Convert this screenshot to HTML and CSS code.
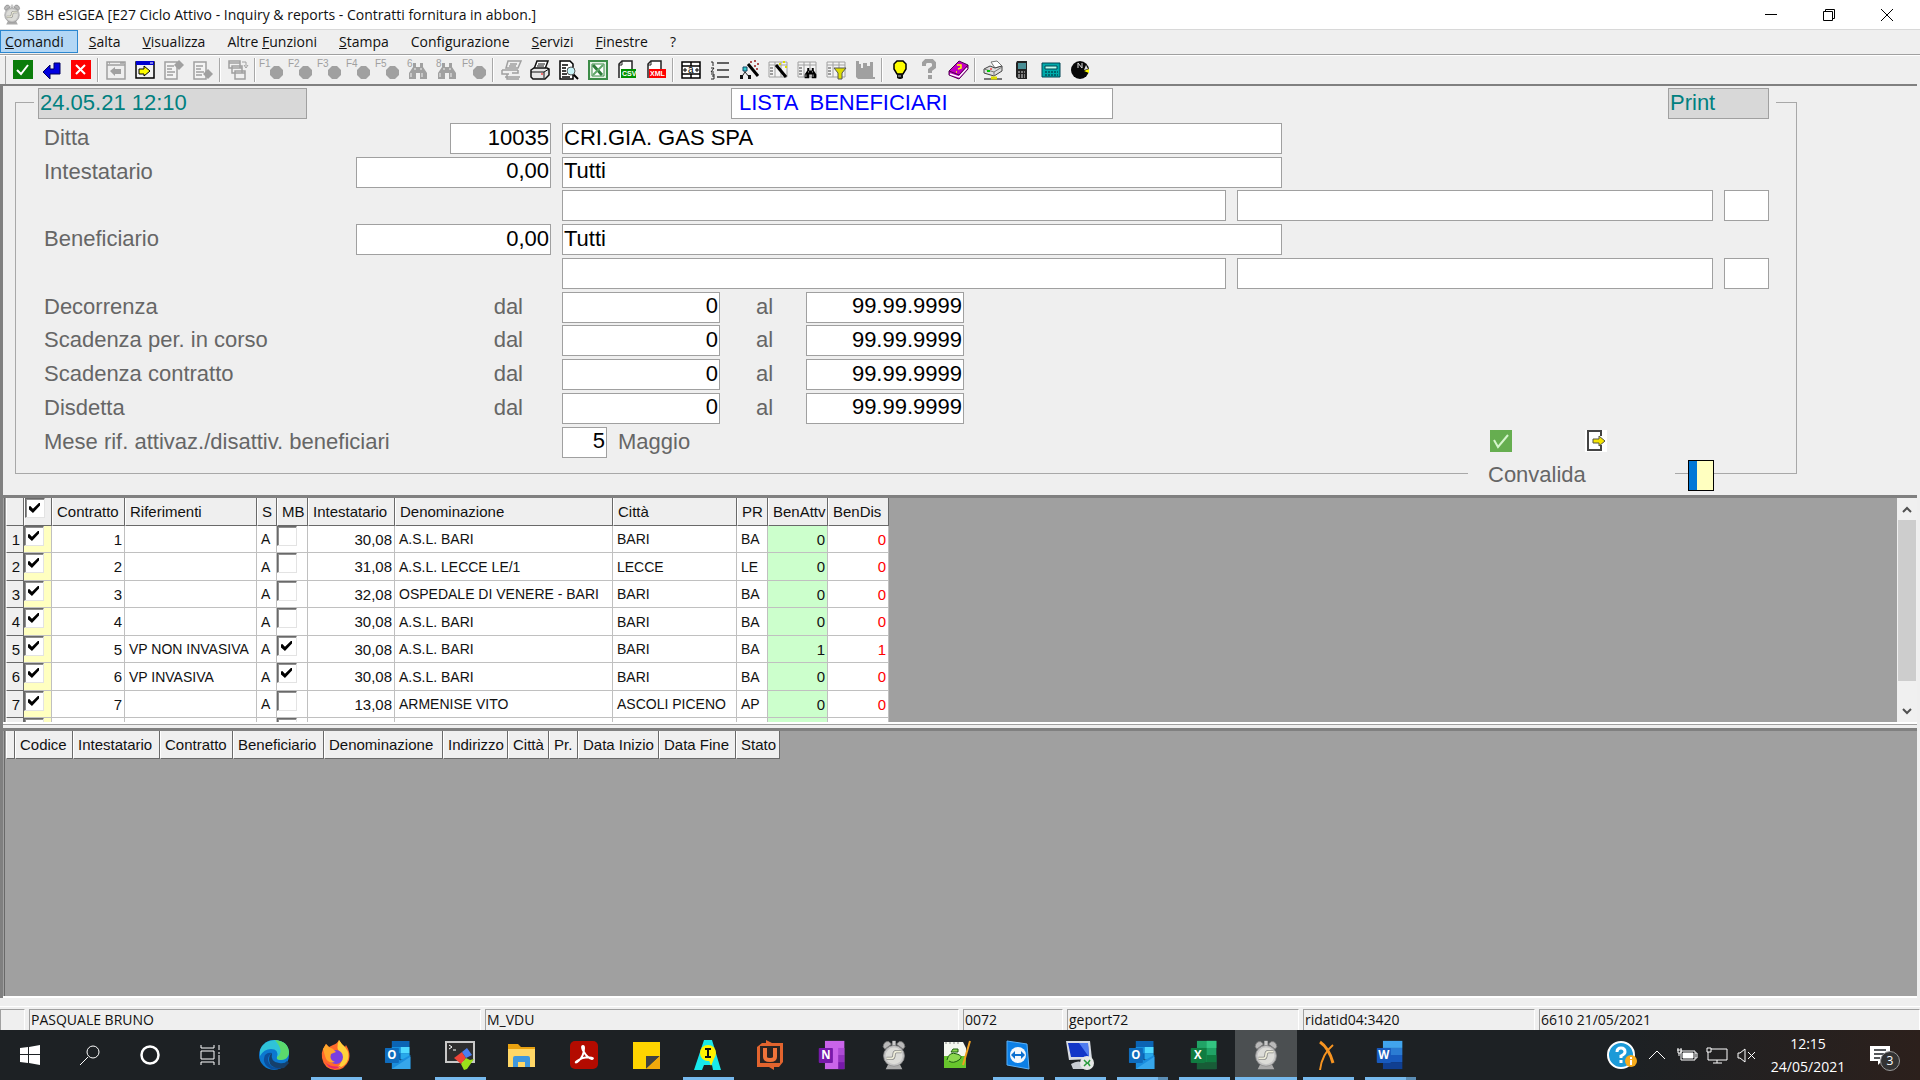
FILE: index.html
```html
<!DOCTYPE html>
<html lang="it">
<head>
    <meta charset="UTF-8">
    <meta name="viewport" content="width=device-width, initial-scale=1.0">
    <title>SBH eSIGEA</title>
    <link rel="stylesheet" href="styles.css">
</head>
<body>

<!-- Shared icon shapes -->
<svg class="defs" aria-hidden="true">
    <symbol id="clock" viewBox="0 0 30 36">
        <path d="M2 8 Q3 1 9 2 L12 5 L4 11Z M28 8 Q27 1 21 2 L18 5 L26 11Z" fill="#b9b9b9" stroke="#777"/>
        <rect x="13" y="1" width="4" height="6" fill="#c9c9c9"/>
        <path d="M5 35 L8 29 H22 L25 35Z" fill="#aaa"/>
        <circle cx="15" cy="19" r="12.500" fill="#c4c4c4" stroke="#8d8d8d"/>
        <circle cx="15" cy="19" r="10" fill="#dcdcd8"/>
        <path d="M6 22 H12 Q15 22 15 18 Q15 14 18 14 H24" fill="none" stroke="#888" stroke-width="4"/>
        <path d="M6 22 H12 Q15 22 15 18 Q15 14 18 14 H24" fill="none" stroke="#ecebd8" stroke-width="2"/>
    </symbol>
    <symbol id="window" viewBox="0 0 20 20">
        <path d="M1 2 H19 V19 H1Z M1 5 H19 M3 3 H4 M14 3 H18" fill="none" stroke="#a0a0a0" stroke-width="1.500"/>
        <path d="M4 11 L9 7 V9 H15 V14 H9 V16Z" fill="#a0a0a0"/>
    </symbol>
    <symbol id="page" viewBox="0 0 20 20">
        <path d="M1 2 H13 V19 H1Z M3 6 H10 M3 9 H8 M3 12 H11 M3 15 H9" fill="#f4f4f4" stroke="#a0a0a0" stroke-width="1.500"/>
    </symbol>
    <symbol id="dot" viewBox="0 0 20 20">
        <path d="M11 6 H16 L20 10 V15 L16 19 H11 L7 15 V10Z" fill="#a0a0a0"/>
    </symbol>
    <symbol id="binoculars" viewBox="0 0 20 20">
        <path d="M5 3 H8 V7 H12 V3 H15 V7 L19 13 V19 H12 V13 H8 V19 H1 V13 L5 7Z"/>
        <path d="M3 13 V17 M14 13 V17 M7 8 V10 M13 8 V10" stroke="#eee" stroke-width="1"/>
    </symbol>
    <symbol id="table" viewBox="0 0 20 20">
        <path d="M1 2 H19 V17 H1Z" fill="#f4f4f4" stroke="#a0a0a0"/>
        <path d="M1 5 H19 M7 2 V17 M13 2 V17" stroke="#a0a0a0" fill="none"/>
        <path d="M2 8 H6 M2 11 H6 M2 14 H6" stroke="#444" stroke-dasharray="3 1"/>
    </symbol>
    <symbol id="printer" viewBox="0 0 20 20">
        <path d="M7 1 H18 L15 9 H4Z" fill="#fff" stroke="currentColor" stroke-width="1.500"/>
        <path d="M8 4 H15 M7 6 H14" stroke="currentColor"/>
        <path d="M1 10 L4 8 H17 L19 9 V15 L15 19 H3 L1 17Z" fill="#e6e6e6" stroke="currentColor" stroke-width="1.500"/>
        <path d="M1 12 H14 V18 M14 12 L19 9" fill="none" stroke="currentColor"/>
    </symbol>
    <symbol id="outlook" viewBox="0 0 30 34">
        <path d="M8 1 H28 V22 H8Z" fill="#0b64b4"/>
        <path d="M8 8 H18 V15 H8Z" fill="#1490df"/>
        <path d="M18 8 H28 V15 H18Z" fill="#50d9ff"/>
        <path d="M18 15 H28 V22 H18Z" fill="#28a8ea"/>
        <path d="M8 17 L18 23 L29 17 V33 H8Z" fill="#1a8ddd"/>
        <path d="M8 33 L29 19 V33Z" fill="#36a6ea"/>
        <rect x="0" y="9" width="16" height="17" rx="1" fill="#0f6cbd"/>
    </symbol>
</svg>

<header class="titlebar">
    <svg class="app-icon"><use href="#clock"/></svg>
    <h1>SBH eSIGEA [E27 Ciclo Attivo - Inquiry &amp; reports - Contratti fornitura in abbon.]</h1>
    <div class="window-buttons">
        <button aria-label="Riduci"><svg viewBox="0 0 12 12"><path d="M0 5.500 H12"/></svg></button>
        <button aria-label="Ripristina"><svg viewBox="0 0 12 12"><path d="M.5 2.500 H9.500 V11.500 H.5Z M2.500 2.500 V.5 H11.500 V9.500 H9.500"/></svg></button>
        <button aria-label="Chiudi"><svg viewBox="0 0 12 12"><path d="M0 0 L12 12 M12 0 L0 12"/></svg></button>
    </div>
</header>

<nav class="menu">
    <button class="open"><u>C</u>omandi</button>
    <button><u>S</u>alta</button>
    <button><u>V</u>isualizza</button>
    <button>Altre <u>F</u>unzioni</button>
    <button><u>S</u>tampa</button>
    <button>Confi<u>g</u>urazione</button>
    <button><u>S</u>ervizi</button>
    <button><u>F</u>inestre</button>
    <button>?</button>
</nav>

<div class="toolbar">
    <button aria-label="Conferma"><svg viewBox="0 0 20 20"><path d="M0 0 H20 V19 H0Z" fill="#0b7d0b"/><path d="M4 10 L8 14 L15 5" fill="none" stroke="#fff" stroke-width="2"/></svg></button>
    <button aria-label="Invio"><svg viewBox="0 0 20 20"><path d="M1 12 L8 5 V9 H12 V3 H18 V14 H8 V19Z" fill="#0000e0" stroke="#000060"/></svg></button>
    <button aria-label="Annulla"><svg viewBox="0 0 20 20"><path d="M0 0 H20 V19 H0Z" fill="#f00"/><path d="M5 5 L14 14 M14 5 L5 14" stroke="#fff" stroke-width="2"/></svg></button>
    <i></i>
    <button aria-label="Indietro"><svg><use href="#window"/></svg></button>
    <button aria-label="Avanti"><svg viewBox="0 0 20 20"><path d="M1 2 H19 V18 H1Z" fill="#f4f4f4" stroke="#000" stroke-width="1.500"/><path d="M1 1 H19 V5 H1Z" fill="#0000d0"/><path d="M15 3 H18" stroke="#fff"/><path d="M4 9 H9 V6 L15 11 L9 16 V14 H4Z" fill="#ff0" stroke="#000"/></svg></button>
    <button aria-label="Pagina su"><svg viewBox="0 0 20 20"><use href="#page"/><path d="M15 0 L20 5 L15 10 L10 5Z" fill="#a0a0a0"/></svg></button>
    <button aria-label="Pagina giu"><svg viewBox="0 0 20 20"><use href="#page"/><path d="M15 9 L20 14 L15 19 L10 14Z" fill="#a0a0a0"/></svg></button>
    <i></i>
    <button aria-label="Finestre"><svg viewBox="0 0 20 20"><path d="M1 1 H12 V8 H1Z M4 6 H14 V13 H4Z M7 11 H17 V19 H7Z M1 3 H12 M4 8 H14 M7 13 H17" fill="#f0f0f0" stroke="#a0a0a0" stroke-width="1.500"/><path d="M14 2 H18 V6 M16 5 L18 8 L20 5" fill="none" stroke="#a0a0a0"/></svg></button>
    <i></i>
    <button aria-label="F1"><svg viewBox="0 0 20 20"><text x="-4" y="7">F1</text><use href="#dot"/></svg></button>
    <button aria-label="F2"><svg viewBox="0 0 20 20"><text x="-4" y="7">F2</text><use href="#dot"/></svg></button>
    <button aria-label="F3"><svg viewBox="0 0 20 20"><text x="-4" y="7">F3</text><use href="#dot"/></svg></button>
    <button aria-label="F4"><svg viewBox="0 0 20 20"><text x="-4" y="7">F4</text><use href="#dot"/></svg></button>
    <button aria-label="F5"><svg viewBox="0 0 20 20"><text x="-4" y="7">F5</text><use href="#dot"/></svg></button>
    <button aria-label="Cerca 6"><svg viewBox="0 0 20 20"><text x="-1" y="7">6</text><use href="#binoculars" fill="#a0a0a0"/></svg></button>
    <button aria-label="Cerca 8"><svg viewBox="0 0 20 20"><text x="-1" y="7">8</text><use href="#binoculars" fill="#a0a0a0"/></svg></button>
    <button aria-label="F9"><svg viewBox="0 0 20 20"><text x="-4" y="7">F9</text><use href="#dot"/></svg></button>
    <i></i>
    <button aria-label="Stampa video"><svg viewBox="0 0 20 20"><path d="M7 1 H20 L17 8 H5Z M9 4 H16 M8 6 H15 M1 10 H17 M1 10 V14 H8 M4 17 H19 M17 10 V13 H11 M6 14 V19 H18" fill="none" stroke="#a0a0a0" stroke-width="1.500"/></svg></button>
    <button aria-label="Stampa"><svg viewBox="0 0 20 20"><use href="#printer"/><path d="M11 14 H13" stroke="#f00"/></svg></button>
    <button aria-label="Anteprima"><svg viewBox="0 0 20 20"><path d="M1 1 H11 L14 4 V19 H1Z M3 5 H9 M3 8 H7 M3 11 H7 M3 14 H8 M3 17 H11" fill="#fff" stroke="#000" stroke-width="1.500"/><path d="M14 14 L19 19" stroke="#000" stroke-width="2"/><circle cx="12" cy="11" r="4" fill="#c8f4f8" stroke="#555"/></svg></button>
    <button aria-label="Excel"><svg viewBox="0 0 20 20"><path d="M1 1 H19 V19 H1Z" fill="#e4f2e4" stroke="#3c8c48" stroke-width="2"/><path d="M4 4 H16 V16 H4Z" fill="#fff" stroke="#3c8c48"/><path d="M5 5 L14 15" stroke="#2f7d3b" stroke-width="3"/><path d="M15 5 L5 15" stroke="#5fa868" stroke-width="2"/></svg></button>
    <button aria-label="CSV"><svg viewBox="0 0 20 20"><path d="M2 18 V4 L5 1 H15 V9" fill="#fff" stroke="#222" stroke-width="1.500"/><path d="M5 1 V5 H2" fill="none" stroke="#222"/><path d="M4 9 H19 V18 H4Z" fill="#009000"/><text x="5" y="16" class="file-type">CSV</text></svg></button>
    <button aria-label="XML"><svg viewBox="0 0 20 20"><path d="M2 18 V4 L5 1 H15 V9" fill="#fff" stroke="#222" stroke-width="1.500"/><path d="M5 1 V5 H2" fill="none" stroke="#222"/><path d="M3 9 H20 V18 H3Z" fill="#f00"/><text x="4" y="16" class="file-type">XML</text></svg></button>
    <i></i>
    <button aria-label="Larghezza colonne"><svg viewBox="0 0 20 20"><path d="M1 2 H19 V18 H1Z M1 6 H19 M1 14 H19 M10 2 V6 M10 14 V18" fill="#fff" stroke="#000" stroke-width="1.500"/><path d="M2 10 H6 M4 8 V12 M14 10 H18 M16 8 V12" stroke="#000"/><text x="7" y="13" class="glyph">a</text></svg></button>
    <button aria-label="Numerazione"><svg viewBox="0 0 20 20"><path d="M7 3 H19 M7 10 H19 M7 17 H19" stroke="#333" stroke-width="1.500"/><path d="M1 2 H3 V6 M1 8 H4 L1 12 H4 M1 14 H4 V19 H1 M2 16 H4" fill="none" stroke="#222"/></svg></button>
    <button aria-label="Bacchetta"><svg viewBox="0 0 20 20"><path d="M9 4 L19 16" stroke="#000" stroke-width="3"/><path d="M6 9 V12 L2 18 M6 12 L11 18" fill="none" stroke="#222"/><path d="M4 7 H8 V11 H4Z" fill="#3cc" stroke="#146"/><path d="M1 15 H4 V19 H1Z M9 15 H12 V19 H9Z" fill="#111"/><path d="M11 2 H13 M15 1 H17 M18 4 H20 M15 6 H17 M17 9 H19" stroke="#b05050" stroke-width="2"/></svg></button>
    <button aria-label="Modifica tabella"><svg viewBox="0 0 20 20"><use href="#table"/><path d="M8 5 L18 17" stroke="#000" stroke-width="3"/><path d="M11 4 H13 M15 2 H17 M17 7 H19" stroke="#dd0" stroke-width="2"/></svg></button>
    <button aria-label="Cerca in tabella"><svg viewBox="0 0 20 20"><use href="#table"/><use href="#binoculars" x="7" y="6" width="13" height="13" fill="#000"/></svg></button>
    <button aria-label="Filtro"><svg viewBox="0 0 20 20"><use href="#table"/><path d="M8 8 H20 L16 13 V19 H12 V13Z" fill="#dd0" stroke="#555"/></svg></button>
    <button aria-label="Grafico"><svg viewBox="0 0 20 20"><path d="M1 1 H4 V4 H6 V8 H8 V3 H12 V6 H15 V2 H18 V17 H20 V19 H3 L1 17Z" fill="#a0a0a0"/></svg></button>
    <i></i>
    <button aria-label="Suggerimenti"><svg viewBox="0 0 20 20"><path d="M7 1 H13 L16 4 V9 L13 14 H7 L4 9 V4Z" fill="#ff0" stroke="#000" stroke-width="1.500"/><path d="M7 14 H13 V18 L11 19 H9 L7 18Z" fill="#111"/><path d="M8 16 H11" stroke="#ccc"/></svg></button>
    <button aria-label="Aiuto"><svg viewBox="0 0 20 20"><path d="M5 6 V3 L7 1 H13 L15 3 V7 L11 10 V13 M11 15 V19" fill="none" stroke="#a0a0a0" stroke-width="4"/></svg></button>
    <button aria-label="Manuale"><svg viewBox="0 0 20 20"><path d="M1 11 L11 1 L20 5 V9 L11 19 L1 15Z" fill="#c000c0" stroke="#500050"/><path d="M2 14 L11 17 L19 8" stroke="#fff" stroke-width="1.500" fill="none"/><path d="M1 11 L11 15 L20 5" stroke="#500050" fill="none"/><path d="M9 5 L13 5 L13 8 L10 9 M8 12 H9" stroke="#ff0" fill="none" stroke-width="1.500"/></svg></button>
    <i></i>
    <button aria-label="Stampante di rete"><svg viewBox="0 0 20 20"><path d="M8 2 L14 1 L19 6 L12 8Z" fill="#fff" stroke="#777"/><path d="M1 9 L7 6 L12 8 L19 6 V11 L11 16 L1 13Z" fill="#ddd" stroke="#444"/><path d="M1 9 L11 12 L19 7 M11 12 V16" stroke="#777"/><path d="M4 11 H7" stroke="#0c0" stroke-width="2"/><path d="M7 9 H9" stroke="#f00"/><path d="M1 19 H19" stroke="#000"/><path d="M8 18 H14" stroke="#dd0" stroke-width="3"/></svg></button>
    <button aria-label="Palmare"><svg viewBox="0 0 20 20"><path d="M5 1 H15 V19 H6 L4 17 V3Z" fill="#222"/><path d="M6 3 H14 V9 H6Z" fill="#4a8f96"/><path d="M6 12 H13 M6 15 H13 M6 17 H13" stroke="#ddd" stroke-dasharray="2 1"/></svg></button>
    <button aria-label="Terminale"><svg viewBox="0 0 20 20"><path d="M1 3 H19 V17 H1Z" fill="#0aa" stroke="#045"/><path d="M4 6 H16 V9 H4Z" fill="#bfe" stroke="#045"/><path d="M4 12 H17 M4 15 H17" stroke="#023" stroke-dasharray="2 1"/></svg></button>
    <button aria-label="Bussola"><svg viewBox="0 0 20 20"><circle cx="10" cy="10" r="9" fill="#080808"/><path d="M8 3 V8 M8 3 L12 8 V3" fill="none" stroke="#ddd"/><path d="M14 10 L16 5 L18 9Z" fill="#ddd"/><path d="M14 11 L19 9 V13Z" fill="#ff0"/></svg></button>
</div>

<main>
    <form>
        <fieldset>
            <legend>
                <input class="info date-box" value="24.05.21 12:10" aria-label="Data" readonly>
                <input class="title-box" value="LISTA  BENEFICIARI" aria-label="Titolo" readonly>
                <input class="info print-box" value="Print" aria-label="Print" readonly>
            </legend>
            <div class="rows">
                <div class="row">
                    <div class="lead"><label for="ditta">Ditta</label><input id="ditta" class="num w-code" value="10035"></div>
                    <input class="w-name" value="CRI.GIA. GAS SPA" aria-label="Ragione sociale">
                </div>
                <div class="row">
                    <div class="lead"><label for="intestatario">Intestatario</label><input id="intestatario" class="num w-amount" value="0,00"></div>
                    <input class="w-name" value="Tutti" aria-label="Nome intestatario">
                </div>
                <div class="row">
                    <div class="lead"></div>
                    <input class="w-street" aria-label="Indirizzo intestatario">
                    <input class="w-city" aria-label="Comune intestatario">
                    <input class="w-short" aria-label="Provincia intestatario">
                </div>
                <div class="row">
                    <div class="lead"><label for="beneficiario">Beneficiario</label><input id="beneficiario" class="num w-amount" value="0,00"></div>
                    <input class="w-name" value="Tutti" aria-label="Nome beneficiario">
                </div>
                <div class="row">
                    <div class="lead"></div>
                    <input class="w-street" aria-label="Indirizzo beneficiario">
                    <input class="w-city" aria-label="Comune beneficiario">
                    <input class="w-short" aria-label="Provincia beneficiario">
                </div>
                <div class="row">
                    <div class="lead"><span>Decorrenza</span><label class="from" for="dec1">dal</label></div>
                    <input id="dec1" class="num w-date" value="0">
                    <label class="to" for="dec2">al</label>
                    <input id="dec2" class="num w-date" value="99.99.9999">
                </div>
                <div class="row">
                    <div class="lead"><span>Scadenza per. in corso</span><label class="from" for="per1">dal</label></div>
                    <input id="per1" class="num w-date" value="0">
                    <label class="to" for="per2">al</label>
                    <input id="per2" class="num w-date" value="99.99.9999">
                </div>
                <div class="row">
                    <div class="lead"><span>Scadenza contratto</span><label class="from" for="con1">dal</label></div>
                    <input id="con1" class="num w-date" value="0">
                    <label class="to" for="con2">al</label>
                    <input id="con2" class="num w-date" value="99.99.9999">
                </div>
                <div class="row">
                    <div class="lead"><span>Disdetta</span><label class="from" for="dis1">dal</label></div>
                    <input id="dis1" class="num w-date" value="0">
                    <label class="to" for="dis2">al</label>
                    <input id="dis2" class="num w-date" value="99.99.9999">
                </div>
                <div class="row">
                    <div class="lead"><label for="mese">Mese rif. attivaz./disattiv. beneficiari</label></div>
                    <input id="mese" class="num w-short" value="5">
                    <span>Maggio</span>
                    <div class="actions">
                        <button type="button" aria-label="Convalida"><svg viewBox="0 0 22 22"><path d="M0 0 H22 V22 H0Z" fill="#66ae50"/><path d="M4 10 L8 17 L18 5" fill="none" stroke="#d6f5cc" stroke-width="2"/></svg></button>
                        <button type="button" aria-label="Esci"><svg viewBox="0 0 22 22"><path d="M0 0 H22 V22 H0Z" fill="#fff"/><path d="M16 6 V1 H3 V20 H16 V15" fill="none" stroke="#444" stroke-width="2"/><path d="M8 9 H14 V6 L20 11 L14 16 V13 H8Z" fill="#f4e400" stroke="#554"/></svg></button>
                    </div>
                </div>
                <div class="row confirm-row">
                    <span class="confirm">Convalida</span>
                    <input class="cursor" aria-label="Conferma">
                </div>
            </div>
        </fieldset>
    </form>

    <section class="panel contracts">
        <div class="viewport">
            <table>
                <colgroup>
                    <col class="c18"><col class="c28"><col class="c73"><col class="c132"><col class="c20"><col class="c31">
                    <col class="c87"><col class="c218"><col class="c124"><col class="c31"><col class="c60"><col class="c61">
                </colgroup>
                <thead>
                    <tr><th></th><th class="tick"><input type="checkbox" aria-label="Seleziona tutti" checked></th><th>Contratto</th><th>Riferimenti</th><th>S</th><th>MB</th><th>Intestatario</th><th>Denominazione</th><th>Città</th><th>PR</th><th>BenAttv</th><th>BenDis</th></tr>
                </thead>
                <tbody>
                    <tr><th>1</th><td class="tick sel"><input type="checkbox" aria-label="Seleziona 1" checked></td><td class="r">1</td><td></td><td>A</td><td class="tick"><input type="checkbox" aria-label="MB 1"></td><td class="r">30,08</td><td>A.S.L. BARI</td><td>BARI</td><td>BA</td><td class="r on">0</td><td class="r off">0</td></tr>
                    <tr><th>2</th><td class="tick sel"><input type="checkbox" aria-label="Seleziona 2" checked></td><td class="r">2</td><td></td><td>A</td><td class="tick"><input type="checkbox" aria-label="MB 2"></td><td class="r">31,08</td><td>A.S.L. LECCE LE/1</td><td>LECCE</td><td>LE</td><td class="r on">0</td><td class="r off">0</td></tr>
                    <tr><th>3</th><td class="tick sel"><input type="checkbox" aria-label="Seleziona 3" checked></td><td class="r">3</td><td></td><td>A</td><td class="tick"><input type="checkbox" aria-label="MB 3"></td><td class="r">32,08</td><td>OSPEDALE DI VENERE - BARI</td><td>BARI</td><td>BA</td><td class="r on">0</td><td class="r off">0</td></tr>
                    <tr><th>4</th><td class="tick sel"><input type="checkbox" aria-label="Seleziona 4" checked></td><td class="r">4</td><td></td><td>A</td><td class="tick"><input type="checkbox" aria-label="MB 4"></td><td class="r">30,08</td><td>A.S.L. BARI</td><td>BARI</td><td>BA</td><td class="r on">0</td><td class="r off">0</td></tr>
                    <tr><th>5</th><td class="tick sel"><input type="checkbox" aria-label="Seleziona 5" checked></td><td class="r">5</td><td>VP NON INVASIVA</td><td>A</td><td class="tick"><input type="checkbox" aria-label="MB 5" checked></td><td class="r">30,08</td><td>A.S.L. BARI</td><td>BARI</td><td>BA</td><td class="r on">1</td><td class="r off">1</td></tr>
                    <tr><th>6</th><td class="tick sel"><input type="checkbox" aria-label="Seleziona 6" checked></td><td class="r">6</td><td>VP INVASIVA</td><td>A</td><td class="tick"><input type="checkbox" aria-label="MB 6" checked></td><td class="r">30,08</td><td>A.S.L. BARI</td><td>BARI</td><td>BA</td><td class="r on">0</td><td class="r off">0</td></tr>
                    <tr><th>7</th><td class="tick sel"><input type="checkbox" aria-label="Seleziona 7" checked></td><td class="r">7</td><td></td><td>A</td><td class="tick"><input type="checkbox" aria-label="MB 7"></td><td class="r">13,08</td><td>ARMENISE VITO</td><td>ASCOLI PICENO</td><td>AP</td><td class="r on">0</td><td class="r off">0</td></tr>
                    <tr><th></th><td class="tick sel"><input type="checkbox" aria-label="Seleziona 8"></td><td></td><td></td><td></td><td class="tick"><input type="checkbox" aria-label="MB 8"></td><td></td><td></td><td></td><td></td><td class="on"></td><td></td></tr>
                </tbody>
            </table>
        </div>
        <div class="scrollbar">
            <svg viewBox="0 0 20 20"><path d="M6 13 L10 9 L14 13"/></svg>
            <div class="thumb"></div>
            <svg viewBox="0 0 20 20"><path d="M6 8 L10 12 L14 8"/></svg>
        </div>
    </section>

    <section class="panel details">
        <div class="viewport">
            <table>
                <colgroup>
                    <col class="c9"><col class="c58"><col class="c87"><col class="c73"><col class="c91"><col class="c119">
                    <col class="c65"><col class="c41"><col class="c29"><col class="c81"><col class="c77"><col class="c44">
                </colgroup>
                <thead>
                    <tr><th></th><th>Codice</th><th>Intestatario</th><th>Contratto</th><th>Beneficiario</th><th>Denominazione</th><th>Indirizzo</th><th>Città</th><th>Pr.</th><th>Data Inizio</th><th>Data Fine</th><th>Stato</th></tr>
                </thead>
            </table>
        </div>
    </section>
</main>

<footer class="statusbar">
    <span></span>
    <span>PASQUALE BRUNO</span>
    <span>M_VDU</span>
    <span>0072</span>
    <span>geport72</span>
    <span>ridatid04:3420</span>
    <span>6610 21/05/2021</span>
</footer>

<div class="taskbar">
    <div class="system">
        <button aria-label="Start"><svg viewBox="0 0 20 20"><path d="M0 3 L8 2 V9 H0Z M9 2 L20 0 V9 H9Z M0 10 H8 V18 L0 17Z M9 10 H20 V20 L9 18Z" fill="#fff"/></svg></button>
        <button aria-label="Cerca"><svg viewBox="0 0 20 20" class="line"><circle cx="13" cy="7" r="6"/><path d="M8 12 L0 20"/></svg></button>
        <button aria-label="Cortana"><svg viewBox="0 0 20 20"><circle cx="10" cy="10" r="8.500" fill="none" stroke="#fff" stroke-width="2.500"/></svg></button>
        <button aria-label="Visualizza attivita"><svg viewBox="0 0 20 20" class="line"><path d="M1 0 V3 H14 V0 M1 6 H14 V14 H1Z M1 20 V17 H14 V20 M19 0 V5 M19 10 V20 M18 8 H20"/></svg></button>
    </div>
    <div class="apps">
        <button aria-label="Edge"><svg viewBox="0 0 30 30"><circle cx="15" cy="15" r="15" fill="#0c78d0"/><path d="M1 10 Q5 0 16 0 Q29 1 30 12 Q30 19 22 20 Q17 20 18 17 Q20 9 12 9 Q5 9 1 16Z" fill="#2fc3d8"/><path d="M16 0 Q29 1 30 12 Q30 19 22 20 Q17 20 18 17 Q26 12 16 0Z" fill="#5bd96c"/><path d="M13 13 Q7 17 10 23 Q14 31 26 25 Q20 31 12 29 Q2 24 6 15 Q9 12 13 13Z" fill="#0b4f9c"/><path d="M13 13 Q11 22 20 23 Q26 24 28 21 L30 23 L25 28 Q11 30 10 20 Q10 15 13 13Z" fill="#15406c"/></svg></button>
        <button class="running" aria-label="Firefox"><svg viewBox="0 0 30 30"><path d="M2 9 L5 4 L8 7 L12 5 Q16 4 18 0 Q21 5 24 7 L25 5 Q30 13 28 20 Q24 30 14 30 Q3 29 1 18 Q0 13 2 9Z" fill="#ff6a2b"/><path d="M18 0 Q21 5 24 7 Q30 14 26 22 Q22 28 15 28 Q23 23 20 14 Q14 9 18 0Z" fill="#ffd13b"/><circle cx="15" cy="17" r="7" fill="#7a3fe0"/><path d="M2 9 L5 4 L8 7 L12 9 L15 12 L10 14 Q8 20 14 22 Q6 24 4 16Z" fill="#ffa62b"/><path d="M4 22 Q10 28 20 26 Q15 31 8 27Z" fill="#e8286c"/></svg></button>
        <button aria-label="Outlook"><svg viewBox="0 0 30 34"><use href="#outlook"/><text x="8" y="22" class="badge-letter">O</text></svg></button>
        <button class="running" aria-label="Terminale"><svg viewBox="0 0 30 30"><path d="M1 2 H29 V22 H1Z" fill="#2e2e2e" stroke="#c8c8c8" stroke-width="2"/><path d="M4 5 L7 7 L4 9 M8 10 H11" fill="none" stroke="#fff"/><path d="M9 18 L17 12 L21 18 L16 24Z" fill="#ef4438"/><path d="M17 12 L22 8 L27 15 L21 18Z" fill="#4b7ff0"/><path d="M16 24 L21 18 L25 20 L29 19 L22 29 L19 30Z" fill="#9be01a"/></svg></button>
        <button aria-label="Esplora file"><svg viewBox="0 0 30 30"><path d="M1 4 H11 L14 7 H28 V27 H1Z" fill="#e9a210"/><path d="M1 9 H28 V27 H1Z" fill="#ffd766"/><path d="M6 27 V18 Q6 16 8 16 H21 Q23 16 23 18 V27 H18 V22 H11 V27Z" fill="#3f97dd"/></svg></button>
        <button aria-label="Acrobat"><svg viewBox="0 0 30 30"><rect x="1" y="1" width="28" height="28" rx="5" fill="#b30b00"/><path d="M14 6 C11 6 16 17 23 19 C27 18 17 15 8 21 C3 25 15 21 15 8 Q15 6 14 6Z" fill="none" stroke="#fff" stroke-width="2"/></svg></button>
        <button aria-label="Note"><svg viewBox="0 0 30 30"><path d="M2 2 H29 V29 H2Z" fill="#ffd400"/><path d="M15 29 V16 H29Z" fill="#3f4142"/><path d="M15 29 L29 16 V29Z" fill="#f0a80c"/></svg></button>
        <button class="running" aria-label="Assistenza"><svg viewBox="0 0 30 30"><path d="M11 0 H19 L28 30 H20 L19 25 H11 L9 30 H1Z" fill="#18e8ec"/><circle cx="15" cy="13" r="8" fill="#fff200"/><path d="M16 20 L18 26 L22 16Z" fill="#fff200"/><path d="M12 9 H18 M15 9 V17 M12 17 H18" stroke="#111" stroke-width="2"/></svg></button>
        <button aria-label="UltraEdit"><svg viewBox="0 0 30 30"><path d="M2 7 L7 3 H11 V0 L17 3 H28 V22 L24 27 H19 V30 L14 27 H2Z" fill="#e2642e"/><path d="M5 6 H25 V23 H5Z" fill="#2a2422"/><path d="M10 8 V17 Q10 20 15 20 Q20 20 20 17 V8" fill="none" stroke="#f0743a" stroke-width="4"/></svg></button>
        <button aria-label="OneNote"><svg viewBox="0 0 30 34"><path d="M7 1 H29 V33 H7Z" fill="#ca64ea"/><path d="M22 9 H29 V17 H22Z" fill="#ae4bd5"/><path d="M22 17 H29 V25 H22Z" fill="#9332bf"/><path d="M22 25 H29 V33 H22Z" fill="#7719aa"/><rect x="0" y="9" width="16" height="17" rx="1" fill="#7719aa"/><text x="8" y="22" class="badge-letter">N</text></svg></button>
        <button aria-label="eSIGEA"><svg><use href="#clock"/></svg></button>
        <button aria-label="Notepad++"><svg viewBox="0 0 30 30"><path d="M3 2 H22 L25 8 V28 H3Z" fill="#f4f7ef"/><path d="M3 16 H25 V28 H3Z" fill="#67c52c"/><path d="M5 2 V4 M9 2 V4 M13 2 V4 M17 2 V4" stroke="#888"/><path d="M6 20 Q8 11 16 14 Q23 16 18 20 Q12 24 8 21 M10 12 H17 V9 H12Z" fill="#8cd850" stroke="#1c5c10"/><path d="M29 1 L22 25" stroke="#f0a020" stroke-width="2"/></svg></button>
        <button class="running" aria-label="TeamViewer"><svg viewBox="0 0 30 30"><path d="M4 1 L24 4 L26 29 L4 25Z" fill="#0b7fe6" stroke="#5bb0f6"/><circle cx="15" cy="15" r="8" fill="#f3f7fb"/><path d="M8 15 L12 11 V14 H18 V11 L22 15 L18 19 V16 H12 V19Z" fill="#0b6fd0"/></svg></button>
        <button class="running" aria-label="Desktop remoto"><svg viewBox="0 0 30 30"><path d="M1 1 H25 L27 19 L4 20Z" fill="#d8dce4"/><path d="M3 3 H23 L24 17 L6 17Z" fill="#1236c8"/><path d="M14 3 H23 L24 17Z" fill="#4f7cf0"/><path d="M6 24 Q14 19 20 24 V29 H8Z" fill="#c8ccd2"/><circle cx="22" cy="23" r="7" fill="#e6e8e6"/><path d="M19 20 L22 23 L19 26 M25 20 L23 23 L25 26" fill="none" stroke="#2a9c3c" stroke-width="1.500"/></svg></button>
        <button class="running more" aria-label="Outlook posta"><svg viewBox="0 0 30 34"><use href="#outlook"/><text x="8" y="22" class="badge-letter">O</text></svg></button>
        <button class="running" aria-label="Excel"><svg viewBox="0 0 30 34"><path d="M7 1 H29 V33 H7Z" fill="#21a366"/><path d="M18 1 H29 V9 H18Z" fill="#33c481"/><path d="M7 9 H18 V25 H7Z" fill="#107c41"/><path d="M7 25 H29 V33 H7Z" fill="#185c37"/><path d="M18 17 H29 V25 H18Z" fill="#107c41"/><rect x="0" y="9" width="16" height="17" rx="1" fill="#107c41"/><text x="8" y="22" class="badge-letter">X</text></svg></button>
        <button class="running active" aria-label="eSIGEA Ciclo Attivo"><svg><use href="#clock"/></svg></button>
        <button class="running" aria-label="X"><svg viewBox="0 0 30 30"><path d="M7 2 Q16 8 20 23" fill="none" stroke="#f79420" stroke-width="3"/><path d="M20 5 Q9 14 7 30" fill="none" stroke="#f79420" stroke-width="2"/></svg></button>
        <button class="running more" aria-label="Word"><svg viewBox="0 0 30 34"><path d="M7 1 H29 V9 H7Z" fill="#41a5ee"/><path d="M7 9 H29 V17 H7Z" fill="#2b7cd3"/><path d="M7 17 H29 V25 H7Z" fill="#185abd"/><path d="M7 25 H29 V33 H7Z" fill="#103f91"/><rect x="0" y="9" width="16" height="17" rx="1" fill="#185abd"/><text x="8" y="22" class="badge-letter">W</text></svg></button>
    </div>
    <div class="tray">
        <button aria-label="Guida"><svg viewBox="0 0 30 28"><circle cx="14" cy="14" r="13" fill="#1b9ad8" stroke="#fff" stroke-width="2"/><path d="M10 11 Q10 7 14 7 Q18 7 18 11 Q18 13 14 15 V17 M14 19 V22" fill="none" stroke="#fff" stroke-width="3"/><circle cx="24" cy="20" r="6" fill="#f7ab1b"/><path d="M24 16 V18 M24 19 V24" stroke="#fff" stroke-width="2"/></svg></button>
        <button aria-label="Icone nascoste"><svg viewBox="0 0 20 20" class="line"><path d="M2 14 L10 6 L18 14"/></svg></button>
        <button aria-label="Batteria"><svg viewBox="0 0 20 20" class="line"><path d="M4 6 H18 V15 H4Z M18 8 H20 V13 H18"/><path d="M6 8 H16 V13 H6Z" fill="#fff"/><path d="M0 5 H5 M1 3 V5 M4 3 V5 M1 5 V8 H4 V5 M2 8 V11"/></svg></button>
        <button aria-label="Rete"><svg viewBox="0 0 20 20" class="line"><path d="M4 4 H20 V15 H1 V7 M10 15 V18 M6 18 H15 M0 3 H4 V7 H0Z"/></svg></button>
        <button aria-label="Volume"><svg viewBox="0 0 20 20" class="line"><path d="M1 8 H3 L8 4 V17 L3 13 H1Z M11 7 L18 14 M18 7 L11 14"/></svg></button>
        <time>12:15<br>24/05/2021</time>
        <button class="notices" aria-label="Notifiche"><svg viewBox="0 0 20 20"><path d="M0 1 H20 V16 H12 L8 20 V16 H0Z" fill="#fff"/><path d="M4 5 H16 M4 9 H16 M4 13 H10" stroke="#1d2124" stroke-width="1.500"/></svg><b>3</b></button>
    </div>
</div>

</body>
</html>
```
FILE: styles.css
```css
* {
    box-sizing: border-box;
}

body {
    margin: 0;
    height: 100vh;
    display: flex;
    flex-direction: column;
    overflow: hidden;
    background: #efefef;
    color: #111;
    font-family: "Open Sans", "Noto Sans", sans-serif;
    font-size: 14px;
}

button {
    padding: 0;
    border: 0;
    background: none;
    font: inherit;
    color: inherit;
}

.defs {
    position: absolute;
    width: 0;
    height: 0;
}

/* Title bar */
.titlebar {
    display: flex;
    align-items: center;
    height: 29px;
    padding: 0 4px 0 2px;
    background: #fff;
}

.app-icon {
    width: 20px;
    height: 21px;
}

.titlebar h1 {
    margin: 0 auto 0 5px;
    font-size: 14px;
    font-weight: 400;
}

.window-buttons {
    display: flex;
}

.window-buttons button {
    display: grid;
    place-items: center;
    width: 58px;
    height: 29px;
}

.window-buttons svg {
    width: 12px;
    height: 12px;
    overflow: visible;
    fill: none;
    stroke: #000;
}

/* Menu bar */
.menu {
    display: flex;
    height: 26px;
    padding-bottom: 1px;
    border-top: 1px solid #d8d8d8;
    border-bottom: 1px solid #a0a0a0;
}

.menu button {
    padding: 0 11px;
    line-height: 22px;
}

.menu .open {
    padding: 0 13px 0 4px;
    border: 1px solid #2b87d0;
    background: #b3d7f5;
    line-height: 20px;
}

/* Toolbar */
.toolbar {
    display: flex;
    align-items: center;
    height: 29px;
    padding-left: 8px;
    border-top: 1px solid #fff;
    box-shadow: inset 5px 0 #efefef, inset 6px 0 #a0a0a0;
}

.toolbar button {
    display: grid;
    place-items: center;
    width: 29px;
    height: 26px;
}

.toolbar svg {
    width: 20px;
    height: 20px;
    overflow: visible;
    fill: none;
}

.toolbar i {
    width: 2px;
    height: 24px;
    margin: 0 2px;
    border-left: 1px solid #a8a8a8;
    border-right: 1px solid #fff;
}

.toolbar text {
    fill: #a0a0a0;
    font: 10px "Liberation Sans", sans-serif;
}

.toolbar .file-type {
    fill: #fff;
    font-size: 7px;
    font-weight: 700;
}

.toolbar .glyph {
    fill: #000;
}

/* Work area */
main {
    flex: 1;
    display: flex;
    flex-direction: column;
    min-height: 0;
    margin-right: 3px;
    border-top: 2px solid #808080;
    border-left: 3px solid #808080;
    font-family: "Liberation Sans", Arial, sans-serif;
    font-size: 15px;
}

form {
    flex: none;
    height: 409px;
    color: #666;
    font-size: 22px;
}

fieldset {
    min-width: 0;
    width: calc(100% - 132px);
    margin: 0 0 0 12px;
    padding: 4px 26px 0 28px;
    border: 1px solid #a8a8a8;
}

legend {
    display: flex;
    align-items: flex-end;
    width: calc(100% + 16px);
    height: 33px;
    margin-left: -10px;
    padding: 0 7px 0 4px;
}

fieldset input {
    height: 31px;
    padding: 0 1px 2px;
    border: 1px solid #a0a0a0;
    border-radius: 0;
    background: #fff;
    color: #000;
    font: inherit;
}

legend .info {
    background: #d8d8d8;
    color: #008080;
}

.date-box {
    width: 269px;
}

fieldset .title-box {
    width: 382px;
    margin-left: 424px;
    padding-left: 7px;
    color: #0000ff;
}

.print-box {
    width: 101px;
    margin-left: auto;
}

.rows {
    display: grid;
    grid-template-rows: repeat(11, 1fr);
    height: 371px;
    margin-bottom: -21px;
}

.row {
    display: flex;
    align-items: flex-start;
    gap: 11px;
    line-height: 29px;
}

.lead {
    display: flex;
    justify-content: space-between;
    width: 507px;
}

.from {
    padding-right: 28px;
}

.to {
    width: 64px;
    padding-left: 25px;
}

fieldset .num {
    text-align: right;
}

.w-code {
    width: 101px;
}

.w-amount {
    width: 195px;
}

.w-name {
    width: 720px;
}

.w-street {
    width: 664px;
}

.w-city {
    width: 476px;
}

.w-short {
    width: 45px;
}

.w-date {
    width: 158px;
}

.actions {
    display: flex;
    gap: 73px;
    width: 282px;
    margin-left: auto;
    padding: 3px 2px;
}

.actions button,
.actions svg {
    display: block;
    width: 22px;
    height: 22px;
}

.confirm-row {
    justify-content: flex-end;
    gap: 13px;
    padding-right: 56px;
}

.confirm {
    width: 207px;
    padding-left: 20px;
    background: #efefef;
}

fieldset .cursor {
    width: 26px;
    border: 1px solid #000;
    background: linear-gradient(90deg, #0078d7 8px, #ffffc0 8px);
}

/* Grids */
.panel {
    display: flex;
    min-height: 0;
    padding-left: 3px;
    border-top: 3px solid #808080;
    border-bottom: 2px solid #fff;
    background: #a0a0a0;
    box-shadow: inset 1px 0 #a0a0a0, inset 2px 0 #696969, 0 1px #a0a0a0;
}

.contracts {
    flex: none;
    height: 229px;
}

.details {
    flex: 1;
    margin-top: 4px;
}

.viewport {
    flex: 1;
    overflow: hidden;
}

table {
    width: 0;
    table-layout: fixed;
    border-collapse: separate;
    border-spacing: 0;
    white-space: nowrap;
}

.c9 { width: 9px; }
.c18 { width: 18px; }
.c20 { width: 20px; }
.c28 { width: 28px; }
.c29 { width: 29px; }
.c31 { width: 31px; }
.c41 { width: 41px; }
.c44 { width: 44px; }
.c58 { width: 58px; }
.c60 { width: 60px; }
.c61 { width: 61px; }
.c65 { width: 65px; }
.c73 { width: 73px; }
.c77 { width: 77px; }
.c81 { width: 81px; }
.c87 { width: 87px; }
.c91 { width: 91px; }
.c119 { width: 119px; }
.c124 { width: 124px; }
.c132 { width: 132px; }
.c218 { width: 218px; }

th,
td {
    height: 28px;
    padding: 0 4px;
    border-right: 1px solid #c0c0c0;
    border-bottom: 1px solid #c0c0c0;
    background: #fff;
    font-weight: 400;
    text-align: left;
}

td {
    font-size: 14px;
}

th {
    border-left: 1px solid #fff;
    border-right-color: #696969;
    border-bottom-color: #696969;
    background: #efefef;
}

tbody th {
    padding: 0 3px;
    text-align: right;
}

tbody tr:nth-child(odd) > * {
    height: 27px;
}

td.r {
    padding: 0 2px;
    font-size: 15px;
    text-align: right;
}

th.tick,
td.tick {
    padding: 0;
    vertical-align: top;
}

.sel {
    background: #ffffc0;
}

.on {
    background: #ccffcc;
}

.off {
    color: #f00;
}

table input {
    appearance: none;
    display: block;
    width: 20px;
    height: 20px;
    margin: 0;
    border: 1px solid;
    border-color: #696969 #e3e3e3 #e3e3e3 #696969;
    background: #fff;
    box-shadow: inset 1px 1px #909090;
}

table input:checked::before {
    content: "";
    display: block;
    width: 11px;
    height: 10px;
    margin: 4px 0 0 3px;
    background: #000;
    clip-path: polygon(0 35%, 12% 30%, 36% 58%, 90% 0, 100% 0, 100% 26%, 36% 100%, 0 66%);
}

.scrollbar {
    display: flex;
    flex-direction: column;
    width: 20px;
    background: #f0f0f0;
}

.scrollbar svg {
    width: 20px;
    height: 22px;
    fill: none;
    stroke: #505050;
    stroke-width: 2;
}

.scrollbar .thumb {
    height: 161px;
    margin: 0 1px auto;
    background: #cdcdcd;
}

/* Status bar */
.statusbar {
    display: grid;
    grid-template-columns: 25px 452px 474px 100px 232px 232px 1fr;
    gap: 4px;
    height: 32px;
    padding-top: 11px;
    background: linear-gradient(#efefef 8px, #fff 8px, #fff 9px, #efefef 9px);
}

.statusbar span {
    padding-left: 1px;
    border-top: 1px solid #a0a0a0;
    border-left: 1px solid #a0a0a0;
    border-right: 1px solid #fff;
    line-height: 19px;
}

/* Taskbar */
.taskbar {
    display: flex;
    height: 50px;
    background: linear-gradient(90deg, #1d2124 85%, #2c201c);
    color: #fff;
}

.taskbar button {
    display: grid;
    place-items: center;
}

.system {
    display: flex;
    margin-right: 3px;
}

.system button {
    width: 60px;
}

.system svg {
    width: 20px;
    height: 20px;
}

.line {
    fill: none;
    stroke: #fff;
    stroke-width: 1;
    overflow: visible;
}

.apps {
    display: flex;
}

.apps button {
    width: 62px;
}

.apps svg {
    width: 30px;
    height: 30px;
}

.running {
    background: linear-gradient(#76b9ed, #76b9ed) bottom / 51px 3px no-repeat;
}

.more {
    background-image: linear-gradient(90deg, #76b9ed 41px, #5b8db4 41px);
}

.taskbar .active {
    background-color: #4b4f51;
    background-size: 62px 3px;
}

.badge-letter {
    fill: #fff;
    font: 700 13px "Open Sans", sans-serif;
    text-anchor: middle;
}

.tray {
    display: flex;
    align-items: center;
    margin-left: auto;
    padding-right: 26px;
}

.tray button {
    width: 30px;
}

.tray svg {
    width: 20px;
    height: 20px;
}

.tray button:first-child {
    width: 40px;
}

.tray button:first-child svg {
    width: 30px;
    height: 28px;
}

.tray time {
    width: 92px;
    line-height: 23px;
    text-align: center;
}

.tray .notices {
    position: relative;
    width: 28px;
    margin-left: 12px;
}

.notices b {
    position: absolute;
    top: 6px;
    left: 14px;
    width: 20px;
    height: 20px;
    border: 1px solid #999;
    border-radius: 50%;
    background: #333;
    font-size: 12px;
    font-weight: 400;
    line-height: 18px;
}
```
